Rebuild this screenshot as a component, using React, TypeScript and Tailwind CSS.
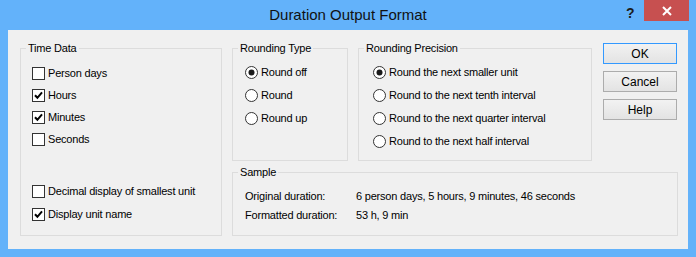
import React from "react";

type BoxProps = { label: string; checked?: boolean };

function CheckBox({ label, checked }: BoxProps) {
  return (
    <div className="flex items-center gap-[3px]">
      <svg width="13" height="13" viewBox="0 0 13 13" className="shrink-0">
        <rect x="0.5" y="0.5" width="12" height="12" fill="#ffffff" stroke="#333333" />
        {checked && (
          <path d="M3 6.2 L5.4 8.8 L10 3.4" fill="none" stroke="#000000" strokeWidth="2" />
        )}
      </svg>
      <span>{label}</span>
    </div>
  );
}

function Radio({ label, checked }: BoxProps) {
  return (
    <div className="flex h-[23px] items-center gap-[3px]">
      <svg width="13" height="13" viewBox="0 0 13 13" className="shrink-0">
        <circle cx="6.5" cy="6.5" r="6" fill="#ffffff" stroke="#333333" />
        {checked && <circle cx="6.5" cy="6.5" r="3" fill="#1a1a1a" />}
      </svg>
      <span>{label}</span>
    </div>
  );
}

function Group({
  title,
  className,
  children,
}: {
  title: string;
  className: string;
  children: React.ReactNode;
}) {
  return (
    <fieldset className={"border border-[#dcdcdc] " + className}>
      <legend className="ml-[5px] px-[2px] leading-[13px]">{title}</legend>
      {children}
    </fieldset>
  );
}

export default function App() {
  return (
    <div
      className="flex h-[257px] w-[696px] flex-col bg-[#63b2fa] text-[11px] tracking-[-0.2px] text-black"
      style={{ fontFamily: '"Liberation Sans", Arial, sans-serif' }}
    >
      {/* title bar */}
      <div className="relative flex h-[30px] shrink-0 items-center justify-center">
        <span className="text-[15px] tracking-normal text-[#111]">Duration Output Format</span>
        <span className="absolute left-[626px] top-[3px] text-[14px] font-bold tracking-normal text-[#1b1b1b]">
          ?
        </span>
        <div className="absolute left-[644px] top-0 flex h-[21px] w-[45px] items-center justify-center bg-[#c75050]">
          <svg width="10" height="10" viewBox="0 0 10 10">
            <path d="M1 1 L9 9 M9 1 L1 9" stroke="#ffffff" strokeWidth="2" />
          </svg>
        </div>
      </div>

      {/* client area */}
      <div className="ml-[8px] flex h-[219px] w-[680px] gap-[10px] bg-[#f0f0f0] pl-[12px] pt-[12px]">
        <Group title="Time Data" className="h-[194px] w-[202px]">
          <div className="flex flex-col pl-[11px] pt-[7px]">
            <div className="flex h-[22px] items-center"><CheckBox label="Person days" /></div>
            <div className="flex h-[22px] items-center"><CheckBox label="Hours" checked /></div>
            <div className="flex h-[22px] items-center"><CheckBox label="Minutes" checked /></div>
            <div className="flex h-[22px] items-center"><CheckBox label="Seconds" /></div>
            <div className="mt-[30px] flex h-[23px] items-center">
              <CheckBox label="Decimal display of smallest unit" />
            </div>
            <div className="flex h-[23px] items-center"><CheckBox label="Display unit name" checked /></div>
          </div>
        </Group>

        <div className="flex w-[446px] flex-col gap-[5px]">
          <div className="flex">
            <Group title="Rounding Type" className="h-[119px] w-[116px]">
              <div className="flex flex-col pl-[12px] pt-[6px]">
                <Radio label="Round off" checked />
                <Radio label="Round" />
                <Radio label="Round up" />
              </div>
            </Group>
            <Group title="Rounding Precision" className="ml-[10px] h-[119px] w-[234px]">
              <div className="flex flex-col pl-[14px] pt-[6px]">
                <Radio label="Round the next smaller unit" checked />
                <Radio label="Round to the next tenth interval" />
                <Radio label="Round to the next quarter interval" />
                <Radio label="Round to the next half interval" />
              </div>
            </Group>
            <div className="ml-[11px] mt-[1px] flex flex-col gap-[7px] tracking-normal">
              <button className="h-[21px] w-[74px] border border-[#3399ff] bg-gradient-to-b from-[#f2f2f2] to-[#e3e3e3] text-[12px]">
                OK
              </button>
              <button className="h-[21px] w-[74px] border border-[#acacac] bg-gradient-to-b from-[#f2f2f2] to-[#e3e3e3] text-[12px]">
                Cancel
              </button>
              <button className="h-[21px] w-[74px] border border-[#acacac] bg-gradient-to-b from-[#f2f2f2] to-[#e3e3e3] text-[12px]">
                Help
              </button>
            </div>
          </div>

          <Group title="Sample" className="h-[70px] w-[446px]">
            <div className="flex flex-col pl-[12px] pt-[8px]">
              <div className="flex h-[19px] items-center">
                <span className="w-[111px]">Original duration:</span>
                <span>6 person days, 5 hours, 9 minutes, 46 seconds</span>
              </div>
              <div className="flex h-[19px] items-center">
                <span className="w-[111px]">Formatted duration:</span>
                <span>53 h, 9 min</span>
              </div>
            </div>
          </Group>
        </div>
      </div>
    </div>
  );
}
